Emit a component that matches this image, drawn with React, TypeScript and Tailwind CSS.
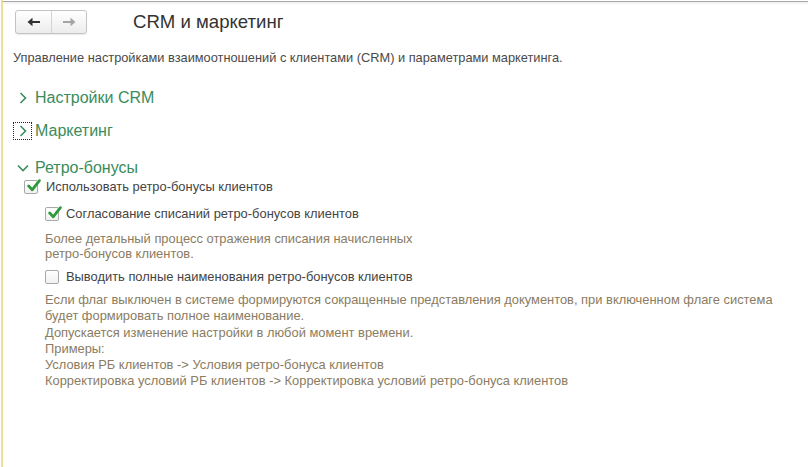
const hint = 'text-[#8a7c62]';

function Check({ checked }: { checked: boolean }) {
  return (
    <span className="relative flex h-[14px] w-[14px] shrink-0 items-center justify-center rounded-[2px] border border-[#a9a9a9] bg-gradient-to-b from-white to-[#f1f1f1]">
      {checked && (
        <svg viewBox="0 0 14 14" className="absolute left-[1px] top-[-3px] h-[15px] w-[15px]">
          <path d="M2.5 7.5 L5.8 11 L12.5 2.5" fill="none" stroke="#2f9a3c" strokeWidth="2.6" strokeLinecap="round" strokeLinejoin="round" />
        </svg>
      )}
    </span>
  );
}

function Group({ title, open, focused }: { title: string; open?: boolean; focused?: boolean }) {
  return (
    <div className="flex h-[22px] items-center text-[16px] text-[#3b8c5c]">
      <span
        className={`flex h-[16px] w-[17px] items-center justify-center ${focused ? 'outline outline-1 outline-dotted outline-[#222]' : ''}`}
      >
        {open ? (
          <svg viewBox="0 0 12 8" className="h-[8px] w-[12px]">
            <path d="M1 1.5 L6 6.5 L11 1.5" fill="none" stroke="#3b8c5c" strokeWidth="1.6" />
          </svg>
        ) : (
          <svg viewBox="0 0 8 12" className="h-[12px] w-[8px]">
            <path d="M1.5 1 L6.5 6 L1.5 11" fill="none" stroke="#3b8c5c" strokeWidth="1.6" />
          </svg>
        )}
      </span>
      <span className="ml-[4px]">{title}</span>
    </div>
  );
}

export default function App() {
  return (
    <div className="relative h-[467px] w-[808px] overflow-hidden bg-white font-['Liberation_Sans',Arial,sans-serif] text-[#444]">
      <div className="absolute left-[1px] top-0 h-full w-[2px] bg-[#eedf98]" />
      <div className="absolute left-[3px] right-0 top-[1px] h-[1px] bg-[#a6a6a6]" />
      <div className="absolute left-[3px] right-0 top-[2px] h-[2px] bg-[#f3f3f3]" />

      <div className="flex items-center pl-[15px] pt-[10px]">
        <div className="flex h-[24px] w-[72px] overflow-hidden rounded-[3px] border border-[#c4c4c4] bg-gradient-to-b from-white to-[#ececec] shadow-[0_1px_1px_rgba(0,0,0,0.08)]">
          <div className="flex w-[36px] items-center justify-center border-r border-[#d4d4d4]">
            <svg viewBox="0 0 14 10" className="h-[10px] w-[14px]">
              <path d="M13 5 H4" stroke="#333" strokeWidth="2.2" />
              <path d="M0.5 5 L5.5 0.8 V9.2 Z" fill="#333" />
            </svg>
          </div>
          <div className="flex flex-1 items-center justify-center">
            <svg viewBox="0 0 14 10" className="h-[10px] w-[14px]">
              <path d="M1 5 H10" stroke="#a4a4a4" strokeWidth="2.2" />
              <path d="M13.5 5 L8.5 0.8 V9.2 Z" fill="#a4a4a4" />
            </svg>
          </div>
        </div>
        <div className="ml-[46px] text-[18.6px] leading-[24px] text-[#333]">CRM и маркетинг</div>
      </div>

      <div className="ml-[13px] mt-[16px] text-[12.8px] leading-[16px] text-[#4a4a4a]">
        Управление настройками взаимоотношений с клиентами (CRM) и параметрами маркетинга.
      </div>

      <div className="ml-[14px] mt-[21px] flex flex-col gap-[11px]">
        <Group title="Настройки CRM" />
        <Group title="Маркетинг" focused />
      </div>

      <div className="ml-[14px] mt-[15px]">
        <Group title="Ретро-бонусы" open />
        <div className="ml-[10px] flex h-[16px] items-center gap-[8px] text-[12.9px] leading-[16px]">
          <Check checked />
          <span>Использовать ретро-бонусы клиентов</span>
        </div>

        <div className="ml-[31px] mt-[11px] flex h-[16px] items-center gap-[7px] text-[12.9px] leading-[16px]">
          <Check checked />
          <span>Согласование списаний ретро-бонусов клиентов</span>
        </div>
        <div className={`ml-[31px] mt-[8.5px] text-[12.9px] leading-[15px] ${hint}`}>
          Более детальный процесс отражения списания начисленных
          <br />
          ретро-бонусов клиентов.
        </div>

        <div className="ml-[31px] mt-[8.5px] flex h-[16px] items-center gap-[7px] text-[12.9px] leading-[16px]">
          <Check checked={false} />
          <span>Выводить полные наименования ретро-бонусов клиентов</span>
        </div>
        <div className={`ml-[31px] mt-[7px] text-[12.9px] leading-[16.3px] ${hint}`}>
          Если флаг выключен в системе формируются сокращенные представления документов, при включенном флаге система
          <br />
          будет формировать полное наименование.
          <br />
          Допускается изменение настройки в любой момент времени.
          <br />
          Примеры:
          <br />
          Условия РБ клиентов -&gt; Условия ретро-бонуса клиентов
          <br />
          Корректировка условий РБ клиентов -&gt; Корректировка условий ретро-бонуса клиентов
        </div>
      </div>
    </div>
  );
}
